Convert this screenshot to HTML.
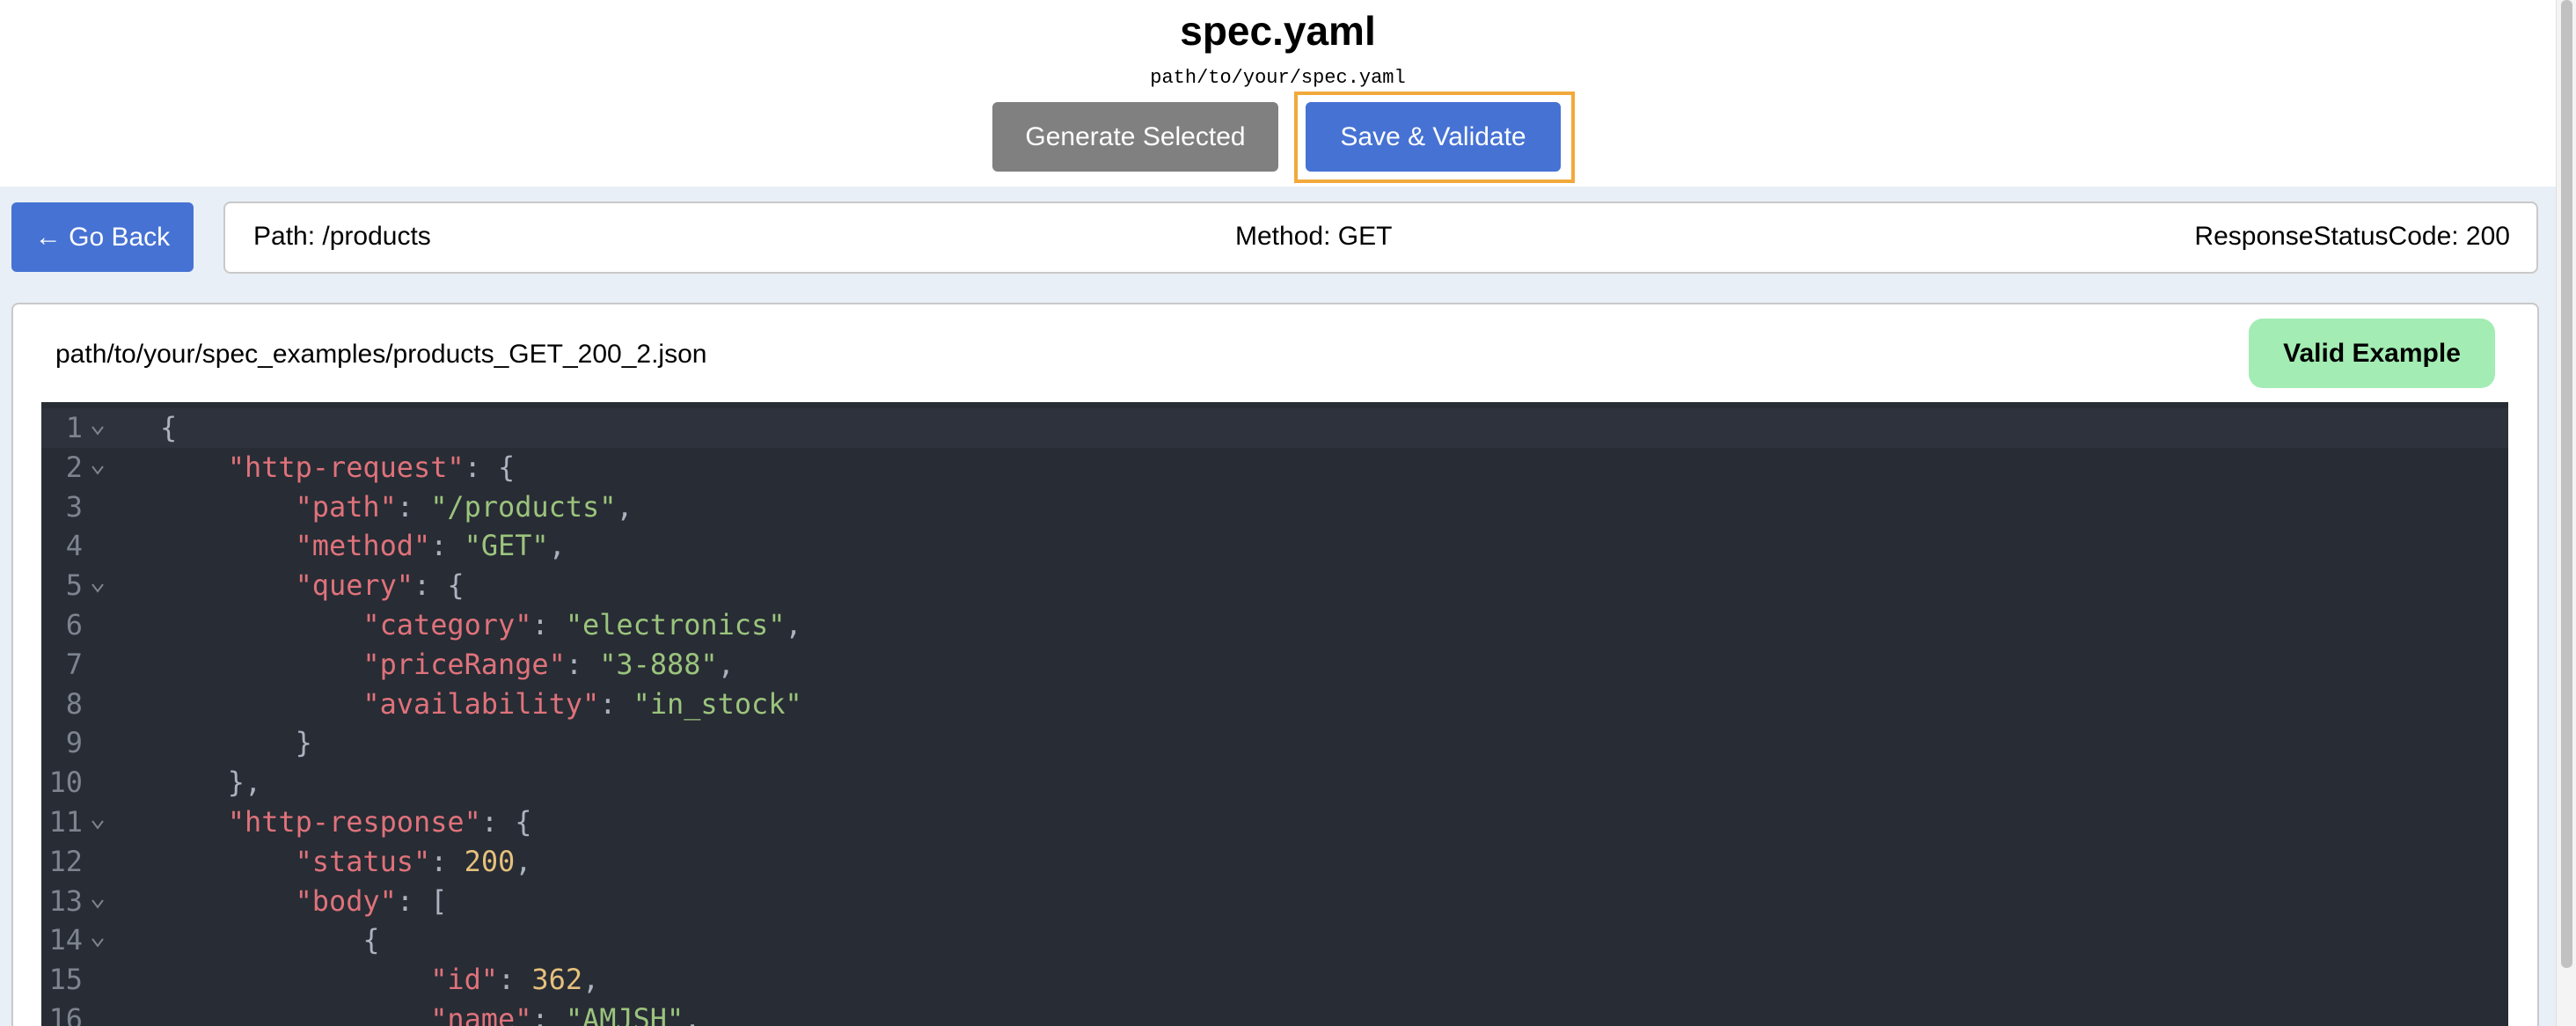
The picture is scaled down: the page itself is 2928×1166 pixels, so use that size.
<!DOCTYPE html>
<html><head><meta charset="utf-8"><style>
*{box-sizing:border-box;margin:0;padding:0}
html,body{width:2928px;height:1166px;overflow:hidden;background:#fff;font-family:"Liberation Sans",sans-serif;position:relative}
.sb{position:absolute;left:2905px;top:0;width:23px;height:1166px;background:#f4f4f4;border-left:1px solid #e0e0e0}
.sb div{position:absolute;left:5px;top:0;width:13px;height:1100px;background:#c1c1c1;border-radius:6px}
.hdr{position:absolute;left:0;top:0;width:2905px;height:212px;background:#fff}
.title{position:absolute;left:0;width:2905px;top:8px;text-align:center;font-size:46px;font-weight:bold;color:#000}
.sub{position:absolute;left:0;width:2905px;top:76px;text-align:center;font-family:"Liberation Mono",monospace;font-size:22px;color:#000}
.btn{position:absolute;color:#fff;font-size:30px;display:flex;align-items:center;justify-content:center;border-radius:6px}
.main{position:absolute;left:0;top:212px;width:2905px;height:954px;background:#e8eff6}
.info{position:absolute;left:254px;top:229px;width:2631px;height:82px;background:#fff;border:2px solid #c9c9c9;border-radius:8px;font-size:30px;color:#000}
.info span{position:absolute;top:21px}
.card{position:absolute;left:13px;top:344px;width:2873px;height:822px;background:#fff;border:2px solid #c9c9c9;border-bottom:none;border-radius:8px 8px 0 0}
.ed{position:absolute;left:47px;top:457px;width:2804px;height:709px;background:#282c34;overflow:hidden;font-family:"DejaVu Sans Mono",monospace;font-size:31.9px;color:#abb2bf}
.ln{position:absolute;left:0;height:44.8px;line-height:44.8px;white-space:pre;width:100%}
.ln .n{position:absolute;left:0;width:47px;color:#7d8490;text-align:right}
.ln svg{position:absolute;left:56px;top:18px}
.ln .c{position:absolute;left:135px}
.k{color:#df727b}.s{color:#9bc47d}.m{color:#e6c17d}
</style></head><body>
<div class="hdr">
<div class="title">spec.yaml</div>
<div class="sub">path/to/your/spec.yaml</div>
<div class="btn" style="left:1128px;top:116px;width:325px;height:79px;background:#808080">Generate Selected</div>
<div style="position:absolute;left:1471px;top:104px;width:319px;height:104px;border:4px solid #f2a93b"></div>
<div class="btn" style="left:1484px;top:116px;width:290px;height:79px;background:#4672d4">Save &amp; Validate</div>
</div>
<div class="main"></div>
<div class="btn" style="left:13px;top:230px;width:207px;height:79px;background:#4672d4">← Go Back</div>
<div class="info">
<span style="left:32px">Path: /products</span>
<span style="left:1148px">Method: GET</span>
<span style="right:30px">ResponseStatusCode: 200</span>
</div>
<div class="card">
<div style="position:absolute;left:48px;top:40px;font-size:30px;color:#000">path/to/your/spec_examples/products_GET_200_2.json</div>
<div style="position:absolute;left:2541px;top:16px;width:280px;height:79px;background:#a3ecb3;border-radius:16px;font-size:30px;font-weight:bold;display:flex;align-items:center;justify-content:center;color:#000">Valid Example</div>
</div>
<div class="ed">
<div style="position:absolute;left:0;top:7px;width:100%;height:45px;background:#2e323c"></div>
<div class="ln" style="top:7px"><span class="n">1</span><svg width="16" height="14"><path d="M2 3l6 8 6-8" fill="none" stroke="#7d8490" stroke-width="2"/></svg><span class="c">{</span></div>
<div class="ln" style="top:51.8px"><span class="n">2</span><svg width="16" height="14"><path d="M2 3l6 8 6-8" fill="none" stroke="#7d8490" stroke-width="2"/></svg><span class="c">    <span class="k">"http-request"</span>: {</span></div>
<div class="ln" style="top:96.6px"><span class="n">3</span><span class="c">        <span class="k">"path"</span>: <span class="s">"/products"</span>,</span></div>
<div class="ln" style="top:141.4px"><span class="n">4</span><span class="c">        <span class="k">"method"</span>: <span class="s">"GET"</span>,</span></div>
<div class="ln" style="top:186.2px"><span class="n">5</span><svg width="16" height="14"><path d="M2 3l6 8 6-8" fill="none" stroke="#7d8490" stroke-width="2"/></svg><span class="c">        <span class="k">"query"</span>: {</span></div>
<div class="ln" style="top:231px"><span class="n">6</span><span class="c">            <span class="k">"category"</span>: <span class="s">"electronics"</span>,</span></div>
<div class="ln" style="top:275.8px"><span class="n">7</span><span class="c">            <span class="k">"priceRange"</span>: <span class="s">"3-888"</span>,</span></div>
<div class="ln" style="top:320.6px"><span class="n">8</span><span class="c">            <span class="k">"availability"</span>: <span class="s">"in_stock"</span></span></div>
<div class="ln" style="top:365.4px"><span class="n">9</span><span class="c">        }</span></div>
<div class="ln" style="top:410.2px"><span class="n">10</span><span class="c">    },</span></div>
<div class="ln" style="top:455px"><span class="n">11</span><svg width="16" height="14"><path d="M2 3l6 8 6-8" fill="none" stroke="#7d8490" stroke-width="2"/></svg><span class="c">    <span class="k">"http-response"</span>: {</span></div>
<div class="ln" style="top:499.8px"><span class="n">12</span><span class="c">        <span class="k">"status"</span>: <span class="m">200</span>,</span></div>
<div class="ln" style="top:544.6px"><span class="n">13</span><svg width="16" height="14"><path d="M2 3l6 8 6-8" fill="none" stroke="#7d8490" stroke-width="2"/></svg><span class="c">        <span class="k">"body"</span>: [</span></div>
<div class="ln" style="top:589.4px"><span class="n">14</span><svg width="16" height="14"><path d="M2 3l6 8 6-8" fill="none" stroke="#7d8490" stroke-width="2"/></svg><span class="c">            {</span></div>
<div class="ln" style="top:634.2px"><span class="n">15</span><span class="c">                <span class="k">"id"</span>: <span class="m">362</span>,</span></div>
<div class="ln" style="top:679px"><span class="n">16</span><span class="c">                <span class="k">"name"</span>: <span class="s">"AMJSH"</span>,</span></div>
</div>
<div class="sb"><div></div></div>
</body></html>
